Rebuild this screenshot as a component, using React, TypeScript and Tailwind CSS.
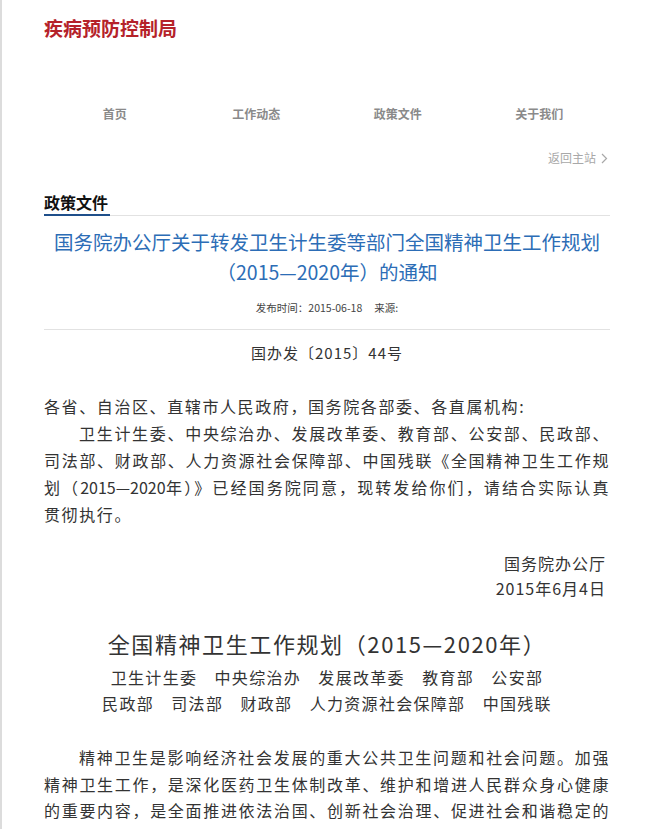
import React from 'react';

const navItems = ['首页', '工作动态', '政策文件', '关于我们'];

const depRows = [
  ['卫生计生委', '中央综治办', '发展改革委', '教育部', '公安部'],
  ['民政部', '司法部', '财政部', '人力资源社会保障部', '中国残联'],
];

const sans = "font-['Noto_Sans_CJK_SC','Noto_Sans',sans-serif]";

const App: React.FC = () => {
  return (
    <div className={`min-h-screen bg-white border-l-2 border-[#dcdcdc] ${sans}`}>
      <div className="ml-[42px] w-[566px] pt-[14px] pb-10">
        {/* site header */}
        <h1 className="text-[19px] leading-[28px] font-bold text-[#b5222a]">疾病预防控制局</h1>

        <nav className="mt-[62px] grid grid-cols-4">
          {navItems.map((item) => (
            <a key={item} className="text-center text-[12px] leading-[20px] font-bold text-[#8a8a8a]">
              {item}
            </a>
          ))}
        </nav>

        <div className="mt-[24px] flex justify-end pr-[2px]">
          <a className="flex items-center gap-[5px] text-[12px] leading-[20px] text-[#a8a8a8]">
            返回主站
            <svg width="7" height="11" viewBox="0 0 7 11" fill="none" stroke="#a8a8a8" strokeWidth="1.2">
              <path d="M1 1l4.5 4.5L1 10" />
            </svg>
          </a>
        </div>

        {/* section heading */}
        <div className="mt-[22px] flex border-b border-[#e2e2e2]">
          <span className="-mb-px border-b-2 border-[#1f4f8a] pr-[2px] text-[16px] leading-[24px] font-bold text-[#111]">
            政策文件
          </span>
        </div>

        <h2 className="mt-[11px] text-center text-[19.5px] leading-[30px] text-[#2c6db6]">
          国务院办公厅关于转发卫生计生委等部门全国精神卫生工作规划
          <br />
          （2015—2020年）的通知
        </h2>

        <div className="mt-[13px] pb-[13px] border-b border-[#e2e2e2] flex justify-center gap-[12px] text-[10.5px] leading-[16px] text-[#444]">
          <span>发布时间：2015-06-18</span>
          <span>来源:</span>
        </div>

        {/* document body */}
        <div className="text-[#333]">
          <p className="mt-[11px] text-center text-[15px] leading-[24px] tracking-[1px]">国办发〔2015〕44号</p>

          <div className="mt-[28px] text-[16px] leading-[27px] tracking-[1.6px] text-justify">
            <p>各省、自治区、直辖市人民政府，国务院各部委、各直属机构:</p>
            <p className="indent-[35px]">
              卫生计生委、中央综治办、发展改革委、教育部、公安部、民政部、司法部、财政部、人力资源社会保障部、中国残联《全国精神卫生工作规划（<span className="tracking-normal">2015—2020</span>年）》已经国务院同意，现转发给你们，请结合实际认真贯彻执行。
            </p>
          </div>

          <div className="mt-[23px] pr-[4px] text-right text-[16px] leading-[25px] tracking-[1px]">
            <p>国务院办公厅</p>
            <p>2015年6月4日</p>
          </div>

          <h3 className="mt-[26px] text-center text-[22px] leading-[32px] tracking-[1.6px]">
            全国精神卫生工作规划（2015—2020年）
          </h3>

          <div className="mt-[5px] flex flex-col items-center text-[16px] leading-[26px] tracking-[1.3px]">
            {depRows.map((row, i) => (
              <p key={i}>{row.join('　')}</p>
            ))}
          </div>

          <p className="mt-[28px] text-[16px] leading-[26.5px] tracking-[1.6px] text-justify indent-[35px]">
            精神卫生是影响经济社会发展的重大公共卫生问题和社会问题。加强精神卫生工作，是深化医药卫生体制改革、维护和增进人民群众身心健康的重要内容，是全面推进依法治国、创新社会治理、促进社会和谐稳定的必然要求，对于建设健康中国、法治中国、平安中国具有重要意义。
          </p>
        </div>
      </div>
    </div>
  );
};

export default App;
